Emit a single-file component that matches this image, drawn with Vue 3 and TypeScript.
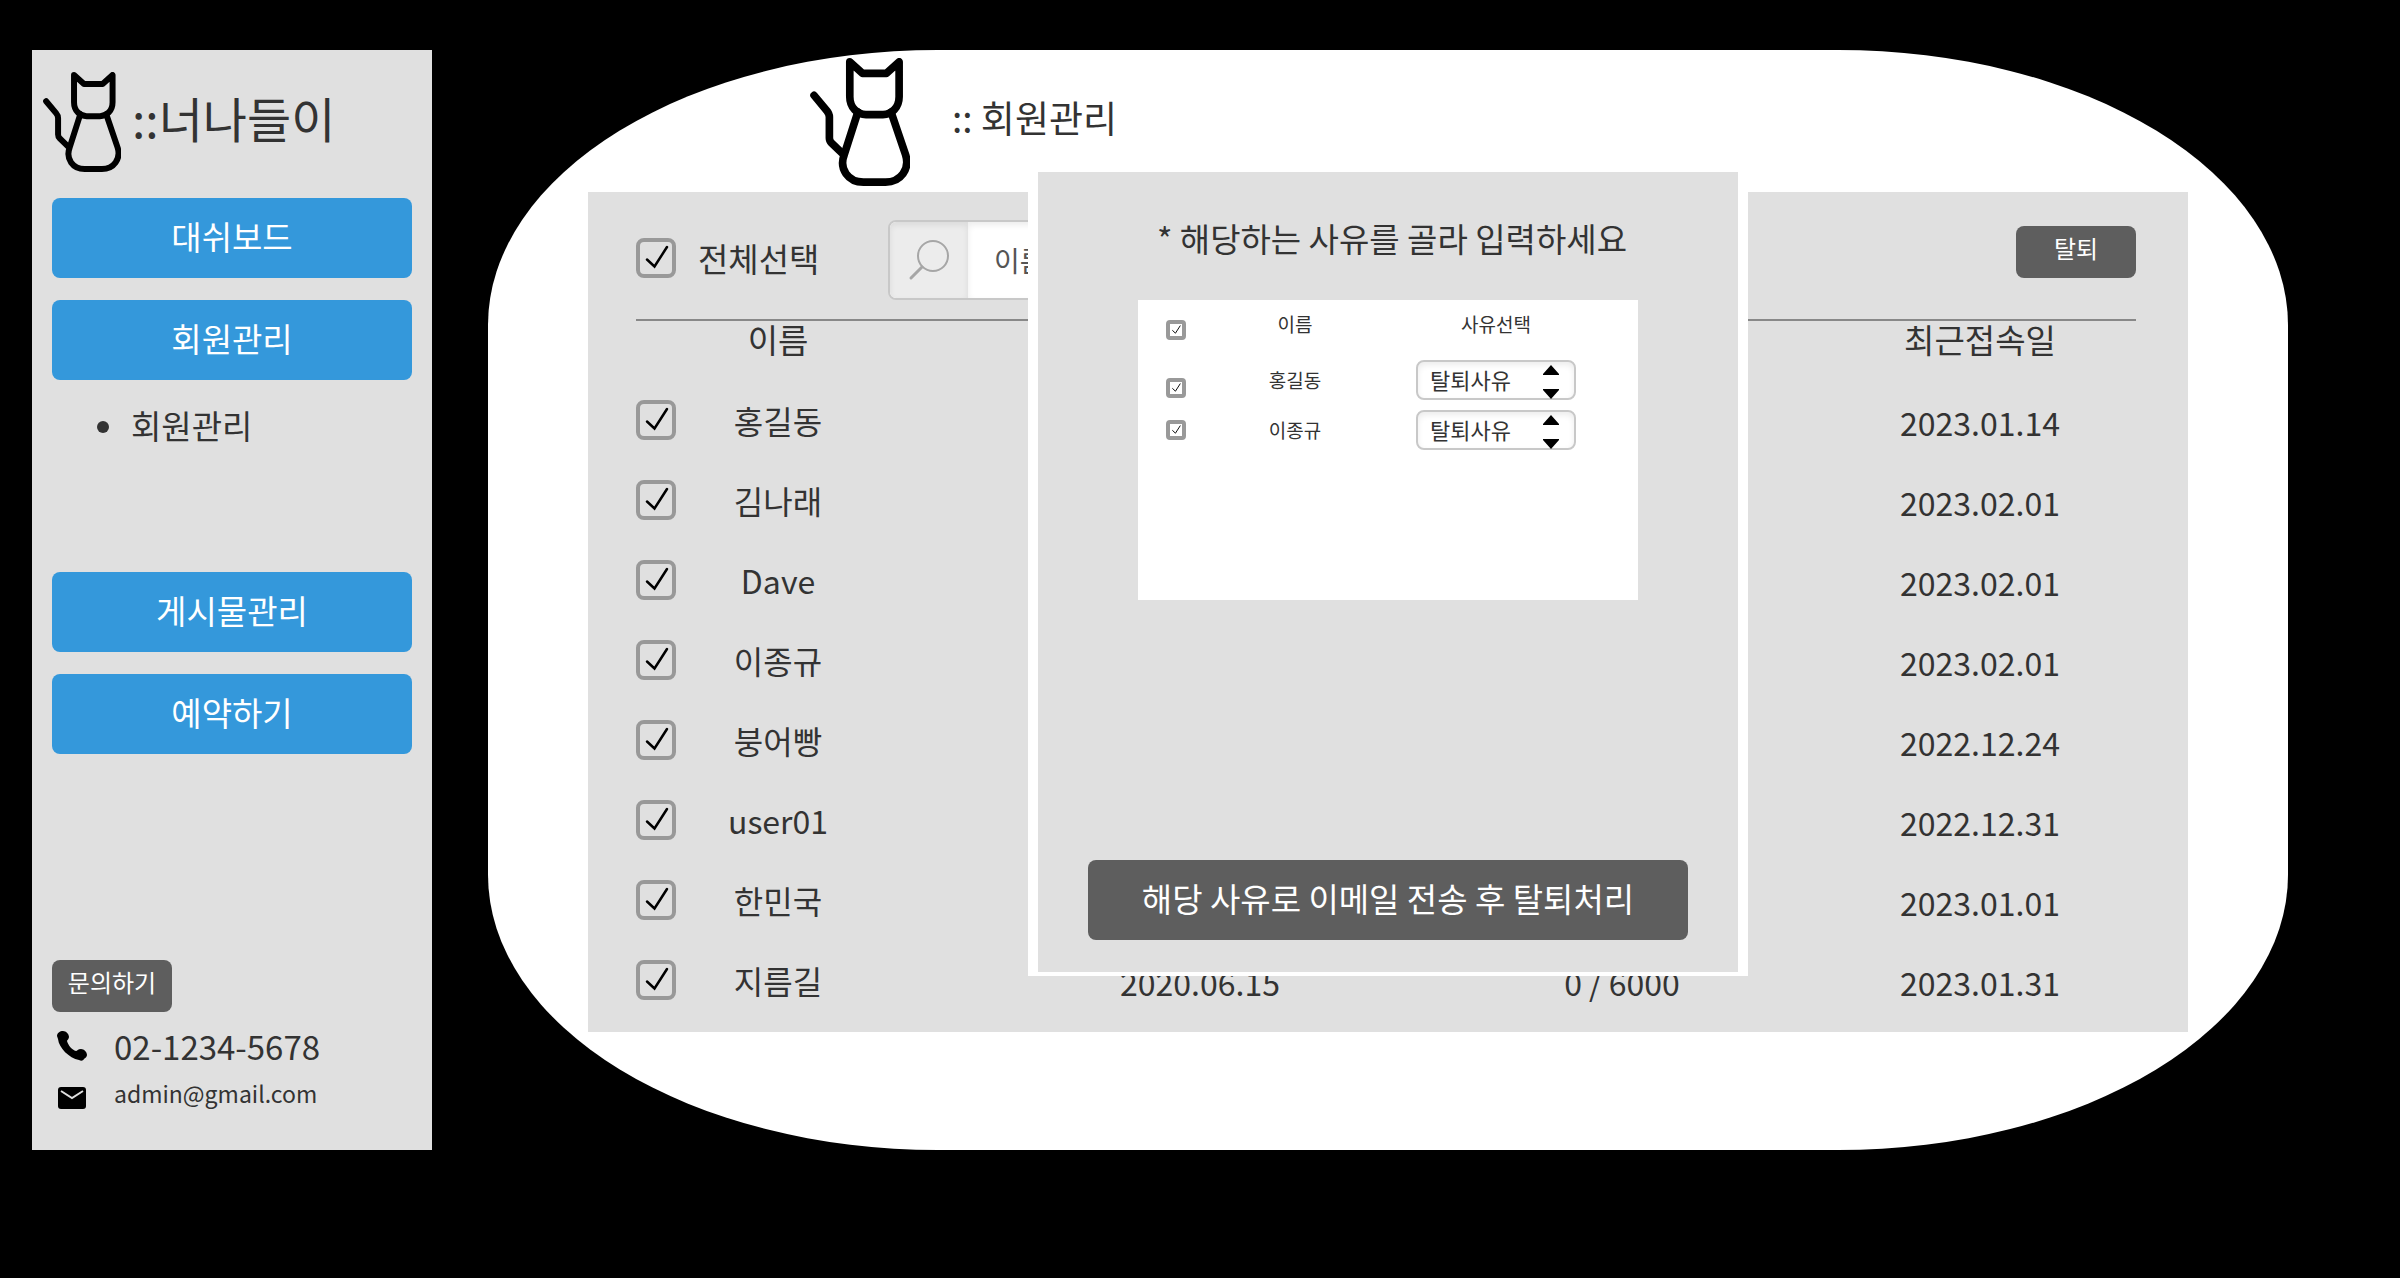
<script setup lang="ts">
import { ref } from 'vue'

interface Member {
  name: string
  joined: string
  usage: string
  lastSeen: string
  checked: boolean
}

const members = ref<Member[]>([
  { name: '홍길동', joined: '', usage: '', lastSeen: '2023.01.14', checked: true },
  { name: '김나래', joined: '', usage: '', lastSeen: '2023.02.01', checked: true },
  { name: 'Dave', joined: '', usage: '', lastSeen: '2023.02.01', checked: true },
  { name: '이종규', joined: '', usage: '', lastSeen: '2023.02.01', checked: true },
  { name: '붕어빵', joined: '', usage: '', lastSeen: '2022.12.24', checked: true },
  { name: 'user01', joined: '', usage: '', lastSeen: '2022.12.31', checked: true },
  { name: '한민국', joined: '', usage: '', lastSeen: '2023.01.01', checked: true },
  { name: '지름길', joined: '2020.06.15', usage: '0 / 6000', lastSeen: '2023.01.31', checked: true },
])

const targets = ref([
  { name: '홍길동', checked: true },
  { name: '이종규', checked: true },
])

const allMembers = ref(true)
const allTargets = ref(true)
</script>

<template>
  <div class="page">
    <svg width="0" height="0" class="defs" aria-hidden="true">
      <symbol id="cat" viewBox="69 95 234 301">
        <g fill="none" stroke="#000" stroke-width="18" stroke-linecap="round" stroke-linejoin="round">
          <path d="M162 104 192 131H248L278 104V186C278 212 260 228 240 228H200C180 228 162 212 162 186Z" />
          <path d="M181 222 149 322C136 356 158 387 194 387H246C282 387 304 356 293 322L259 222" />
          <path d="M78 183 108 219Q114 226 114 234V283Q114 290 119 295L146 321" />
        </g>
      </symbol>
    </svg>

    <aside class="sidebar">
      <div class="brand">
        <svg class="brand-cat" aria-hidden="true"><use href="#cat" /></svg>
        <span>::너나들이</span>
      </div>
      <nav class="menu">
        <button class="nav-btn" type="button">대쉬보드</button>
        <button class="nav-btn" type="button">회원관리</button>
        <ul class="submenu">
          <li><a href="#members">회원관리</a></li>
        </ul>
        <button class="nav-btn" type="button">게시물관리</button>
        <button class="nav-btn" type="button">예약하기</button>
      </nav>
      <footer class="contact">
        <button class="small-btn" type="button">문의하기</button>
        <div class="contact-row">
          <svg class="phone" viewBox="0 0 30 30" aria-hidden="true">
            <path d="M0 5C0 2 3 0 6 0 9 0 12 3 12 6 12 8 10 9 10 10 11 14 15 19 19 20 20 20 21 18 24 18 27 18 30 21 30 24 30 26 28 27 27 28 26 30 24 30 22 29 12 27 2 17 1 8Z" />
          </svg>
          <span class="tel">02-1234-5678</span>
        </div>
        <div class="contact-row">
          <svg class="mail" viewBox="0 0 28 22" aria-hidden="true">
            <rect width="28" height="22" rx="3" />
            <path d="M3 4 14 11 25 4" fill="none" stroke="#e0e0e0" stroke-width="2" />
          </svg>
          <span class="email">admin@gmail.com</span>
        </div>
      </footer>
    </aside>

    <main class="stage">
      <header class="stage-head">
        <svg class="head-cat" aria-hidden="true"><use href="#cat" /></svg>
        <h1>:: 회원관리</h1>
      </header>

      <section id="members" class="panel">
        <div class="toolbar">
          <label class="select-all">
            <input v-model="allMembers" class="check" type="checkbox" />
            <span>전체선택</span>
          </label>
          <div class="search">
            <span class="search-icon">
              <svg viewBox="0 0 80 80" aria-hidden="true">
                <g fill="none" stroke="#a6a6a6" stroke-linecap="round">
                  <circle cx="45" cy="36" r="15" stroke-width="2" />
                  <path d="M34 47 23 58" stroke-width="3" />
                </g>
              </svg>
            </span>
            <input type="text" placeholder="이름" aria-label="이름" />
          </div>
          <button class="small-btn" type="button">탈퇴</button>
        </div>

        <table class="members">
          <colgroup>
            <col class="c-check" />
            <col class="c-name" />
            <col />
            <col class="c-usage" />
            <col class="c-seen" />
          </colgroup>
          <thead>
            <tr>
              <th></th>
              <th class="name">이름</th>
              <th></th>
              <th></th>
              <th>최근접속일</th>
            </tr>
          </thead>
          <tbody>
            <tr v-for="m in members" :key="m.name">
              <td class="pick"><input v-model="m.checked" class="check" type="checkbox" :aria-label="m.name" /></td>
              <td class="name">{{ m.name }}</td>
              <td class="figure">{{ m.joined }}</td>
              <td class="figure">{{ m.usage }}</td>
              <td class="figure">{{ m.lastSeen }}</td>
            </tr>
          </tbody>
        </table>
      </section>

      <div class="modal" role="dialog" aria-labelledby="modal-title">
        <div class="modal-body">
          <h2 id="modal-title">* 해당하는 사유를 골라 입력하세요</h2>
          <div class="sheet">
            <table class="targets">
              <colgroup>
                <col class="t-check" />
                <col class="t-name" />
                <col />
              </colgroup>
              <thead>
                <tr>
                  <th class="pick"><input v-model="allTargets" class="check small" type="checkbox" aria-label="이름" /></th>
                  <th>이름</th>
                  <th>사유선택</th>
                </tr>
              </thead>
              <tbody>
                <tr v-for="t in targets" :key="t.name">
                  <td class="pick"><input v-model="t.checked" class="check small" type="checkbox" :aria-label="t.name" /></td>
                  <td>{{ t.name }}</td>
                  <td>
                    <div class="reason">
                      <select :aria-label="t.name">
                        <option>탈퇴사유</option>
                      </select>
                      <svg viewBox="0 0 16 34" aria-hidden="true">
                        <path d="M8 0 16 9V10H0V9ZM0 24H16V25L8 34 0 25Z" />
                      </svg>
                    </div>
                  </td>
                </tr>
              </tbody>
            </table>
          </div>
          <button class="submit" type="button">해당 사유로 이메일 전송 후 탈퇴처리</button>
        </div>
      </div>
    </main>
  </div>
</template>

<style>
body {
  margin: 0;
  background: #000;
}
</style>

<style scoped>
.page {
  box-sizing: border-box;
  display: flex;
  gap: 56px;
  min-height: 100vh;
  padding: 50px 112px 128px 32px;
  background: #000;
  color: #333;
  font-family: "Noto Sans CJK KR", sans-serif;
  font-size: 33px;
  line-height: 48px;
}

.page * {
  box-sizing: border-box;
}

.defs {
  position: absolute;
}

button,
input,
select {
  font: inherit;
  color: inherit;
}

.sidebar {
  display: flex;
  flex: none;
  flex-direction: column;
  width: 400px;
  padding: 0 20px 26px;
  background: #e0e0e0;
}

.brand {
  display: flex;
  align-items: center;
  gap: 11px;
  height: 148px;
  margin-left: -9px;
  padding-bottom: 4px;
  font-size: 48px;
}

.brand span {
  padding-bottom: 10px;
}

.brand-cat {
  width: 78px;
  height: 100px;
}

.menu {
  display: flex;
  flex-direction: column;
  gap: 22px;
}

.nav-btn,
.submit {
  height: 80px;
  padding: 0 0 4px;
  border: 0;
  border-radius: 8px;
  color: #fff;
}

.nav-btn {
  background: #3498db;
}

.submenu {
  height: 148px;
  margin: 0;
  padding: 0 0 0 45px;
  list-style: none;
}

.submenu li {
  display: flex;
  align-items: center;
  gap: 22px;
  height: 50px;
}

.submenu li::before {
  width: 12px;
  height: 12px;
  border-radius: 50%;
  background: #333;
  content: "";
}

.submenu a {
  padding-bottom: 4px;
  color: inherit;
  text-decoration: none;
}

.contact {
  display: flex;
  flex-direction: column;
  margin-top: auto;
}

.small-btn {
  width: 120px;
  height: 52px;
  padding: 0 0 8px;
  border: 0;
  border-radius: 8px;
  background: #5e5e5e;
  color: #fff;
  font-size: 24px;
  line-height: 36px;
}

.contact-row {
  display: grid;
  grid-template-columns: 62px 1fr;
  align-items: center;
  height: 52px;
}

.contact-row:nth-child(2) {
  margin-top: 8px;
}

.phone {
  width: 30px;
  height: 30px;
  margin-left: 5px;
}

.mail {
  width: 28px;
  height: 22px;
  margin-left: 6px;
}

.email {
  padding-bottom: 10px;
  font-size: 23px;
  line-height: 36px;
}

.stage {
  position: relative;
  flex: 1;
  min-width: 0;
  padding-bottom: 118px;
  border-radius: 25%;
  background: #fff;
}

.stage-head {
  display: flex;
  align-items: center;
  gap: 42px;
  height: 142px;
  padding: 2px 0 0 322px;
}

.head-cat {
  width: 100px;
  height: 128px;
}

h1 {
  margin: 0;
  padding-bottom: 10px;
  font-size: 37px;
  font-weight: 400;
}

.panel {
  margin: 0 100px;
  padding: 0 52px 12px 48px;
  background: #e0e0e0;
}

.toolbar {
  display: flex;
  align-items: flex-start;
  height: 127px;
  padding-top: 28px;
}

.select-all {
  display: flex;
  align-items: center;
  gap: 22px;
  width: 252px;
  height: 76px;
}

.check {
  flex: none;
  width: 40px;
  height: 40px;
  margin: 0;
  border: 4px solid #999;
  border-radius: 8px;
  appearance: none;
}

.check:checked {
  background: url("data:image/svg+xml,%3Csvg xmlns='http://www.w3.org/2000/svg' viewBox='4 4 32 32'%3E%3Cpath d='M11 21.500 18.500 28.500 31 9' fill='none' stroke='%23000' stroke-width='2.500' stroke-linecap='round'/%3E%3C/svg%3E") center / 100% 100% no-repeat;
}

.check.small {
  display: block;
  width: 20px;
  height: 20px;
  border-radius: 4px;
}

.search {
  display: flex;
  width: 600px;
  height: 80px;
  overflow: hidden;
  border: 2px solid #c8c8c8;
  border-radius: 8px;
  background: #fff;
}

.search-icon {
  flex: none;
  width: 78px;
  background: #ececec;
  box-shadow: inset 0 3px 6px rgb(0 0 0 / 8%);
}

.search-icon svg {
  display: block;
  width: 80px;
  height: 80px;
  margin: -2px;
}

.search input {
  flex: 1;
  min-width: 0;
  padding: 0 26px;
  border: 0;
  background: transparent;
  box-shadow: inset 0 3px 6px rgb(0 0 0 / 8%);
  font-size: 28px;
}

.search input::placeholder {
  color: #555;
  opacity: 1;
}

.toolbar .small-btn {
  margin-top: 6px;
  margin-left: auto;
}

table {
  width: 100%;
  border-collapse: separate;
  border-spacing: 0;
  table-layout: fixed;
}

th,
td {
  padding: 0;
  font-weight: 400;
  text-align: center;
}

.members {
  border-top: 2px solid #888;
}

.members th {
  height: 59px;
  padding-bottom: 23px;
  line-height: 36px;
}

.members td {
  height: 80px;
  font-size: 32px;
}

.members .figure {
  padding-top: 4px;
}

.members .pick .check {
  display: block;
}

.members .name {
  padding-right: 100px;
}

.c-check {
  width: 40px;
}

.c-name {
  width: 304px;
}

.c-usage {
  width: 404px;
}

.c-seen {
  width: 312px;
}

.modal {
  position: absolute;
  top: 118px;
  left: 50%;
  width: 720px;
  padding: 4px 10px;
  background: #fff;
  transform: translateX(-50%);
}

.modal-body {
  display: flex;
  flex-direction: column;
  align-items: center;
  height: 800px;
  padding: 42px 50px 32px;
  background: #e0e0e0;
}

h2 {
  margin: 0;
  padding-left: 8px;
  font-size: 33px;
  font-weight: 400;
}

.sheet {
  width: 500px;
  height: 300px;
  margin-top: 38px;
  background: #fff;
}

.targets {
  font-size: 19px;
  line-height: 28px;
}

.targets th {
  height: 55px;
  padding-bottom: 8px;
}

.targets td {
  height: 50px;
}

.targets .pick {
  padding-left: 28px;
}

.targets th.pick {
  padding-top: 12px;
}

.targets tbody tr:first-child .pick {
  padding-top: 16px;
}

.targets th:last-child,
.targets td:last-child {
  padding-right: 22px;
}

.t-check {
  width: 76px;
}

.t-name {
  width: 162px;
}

.reason {
  position: relative;
  width: 160px;
  height: 40px;
  margin: 0 auto;
}

.reason select {
  display: block;
  width: 100%;
  height: 100%;
  padding: 0 12px 2px;
  border: 2px solid #c8c8c8;
  border-radius: 8px;
  appearance: none;
  background: #fff;
  box-shadow: inset 0 3px 6px rgb(0 0 0 / 8%);
  font-size: 22px;
}

.reason svg {
  position: absolute;
  top: 5px;
  right: 17px;
  width: 16px;
  height: 34px;
  pointer-events: none;
}

.submit {
  width: 100%;
  margin-top: auto;
  background: #5e5e5e;
}
</style>
